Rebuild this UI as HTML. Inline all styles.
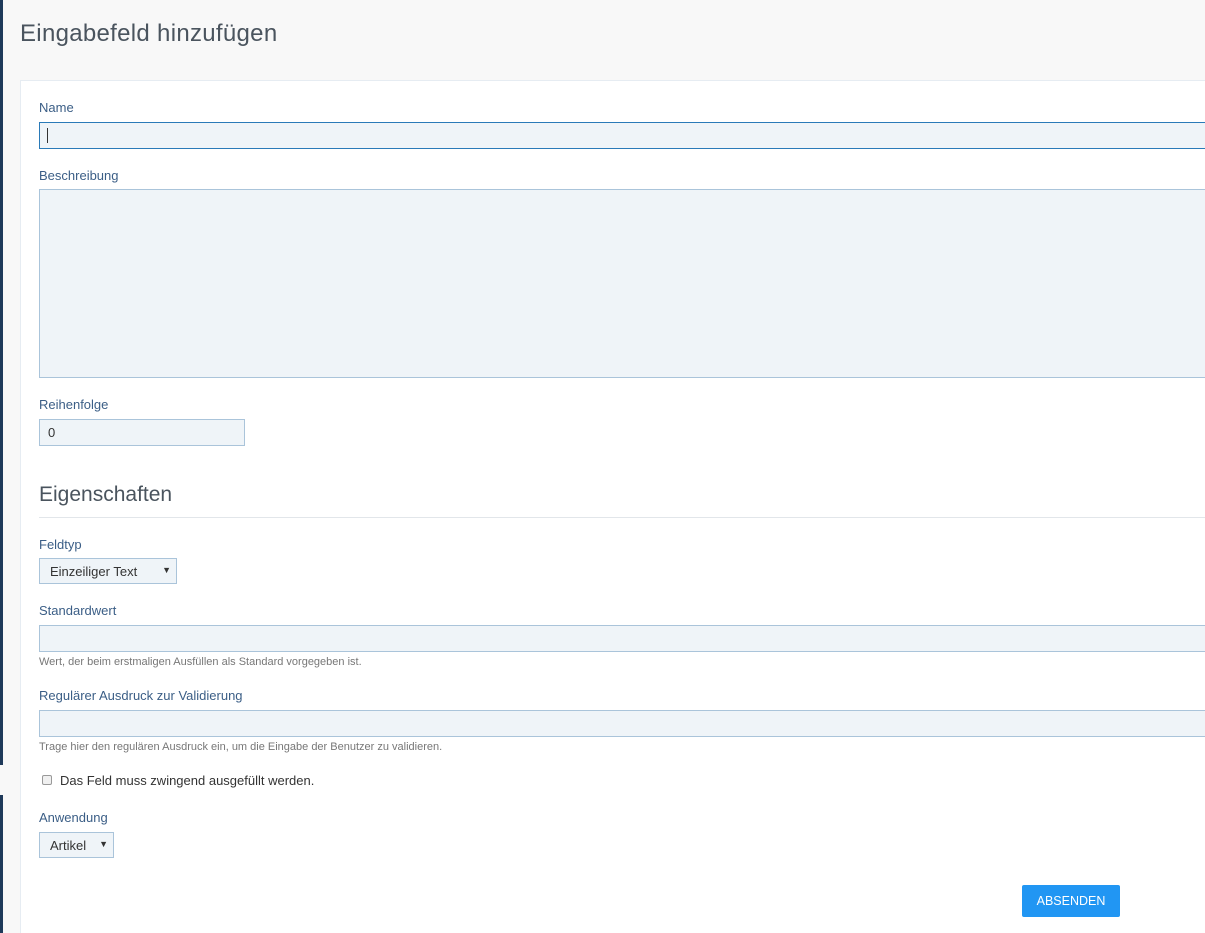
<!DOCTYPE html>
<html><head><meta charset="utf-8"><style>
*{box-sizing:border-box;margin:0;padding:0}
html,body{width:1205px;height:933px;overflow:hidden}
body{background:#f8f8f8;font-family:"Liberation Sans",sans-serif;position:relative}
.bar{position:absolute;left:0;width:3px;background:#1f3a5a}
h1{position:absolute;left:20px;top:20px;font-weight:normal;font-size:24px;color:#4a545e;letter-spacing:0.3px}
.panel{position:absolute;left:20px;top:80px;width:1200px;height:870px;background:#fff;border:1px solid #e6ecf2}
.a{position:absolute}
.lbl{font-size:13px;color:#3b5e86}
.inp{background:#eff4f8;border:1px solid #aac4da}
.help{font-size:11px;color:#777}
.sel{background:#eff4f8;border:1px solid #aac4da;font-size:13px;color:#333;padding:5px 0 0 10px}
.sel span{position:absolute;right:5px;top:6px;font-size:9px}
</style></head><body>
<div class="bar" style="top:0;height:765px"></div>
<div class="bar" style="top:795px;height:138px"></div>
<h1>Eingabefeld hinzufügen</h1>
<div class="panel"></div>
<div class="a lbl" style="left:39px;top:100px">Name</div>
<div class="a inp" style="left:39px;top:122px;width:1180px;height:27px;border-color:#2a7ab8"></div>
<div class="a" style="left:47px;top:128px;width:1px;height:15px;background:#333"></div>
<div class="a lbl" style="left:39px;top:168px">Beschreibung</div>
<div class="a inp" style="left:39px;top:189px;width:1180px;height:189px"></div>
<div class="a lbl" style="left:39px;top:397px">Reihenfolge</div>
<div class="a inp" style="left:39px;top:419px;width:206px;height:27px;font-size:13px;color:#333;padding:5px 0 0 8px">0</div>
<div class="a" style="left:39px;top:483px;font-size:21px;color:#4a545e">Eigenschaften</div>
<div class="a" style="left:39px;top:517px;width:1180px;height:1px;background:#e2e6ea"></div>
<div class="a lbl" style="left:39px;top:537px">Feldtyp</div>
<div class="a sel" style="left:39px;top:558px;width:138px;height:26px">Einzeiliger Text<span>▼</span></div>
<div class="a lbl" style="left:39px;top:603px">Standardwert</div>
<div class="a inp" style="left:39px;top:625px;width:1180px;height:27px"></div>
<div class="a help" style="left:39px;top:656px">Wert, der beim erstmaligen Ausfüllen als Standard vorgegeben ist.</div>
<div class="a lbl" style="left:39px;top:688px">Regulärer Ausdruck zur Validierung</div>
<div class="a inp" style="left:39px;top:710px;width:1180px;height:27px"></div>
<div class="a help" style="left:39px;top:741px">Trage hier den regulären Ausdruck ein, um die Eingabe der Benutzer zu validieren.</div>
<div class="a" style="left:42px;top:775px;width:10px;height:10px;border:1px solid #999;border-radius:2px;background:#f0f0f0"></div>
<div class="a" style="left:60px;top:773px;font-size:13px;color:#333">Das Feld muss zwingend ausgefüllt werden.</div>
<div class="a lbl" style="left:39px;top:810px">Anwendung</div>
<div class="a sel" style="left:39px;top:832px;width:75px;height:26px">Artikel<span>▼</span></div>
<div class="a" style="left:1022px;top:885px;width:98px;height:32px;background:#2196f3;border-radius:2px;color:#fff;font-size:12.5px;text-align:center;line-height:32px">ABSENDEN</div>
</body></html>
